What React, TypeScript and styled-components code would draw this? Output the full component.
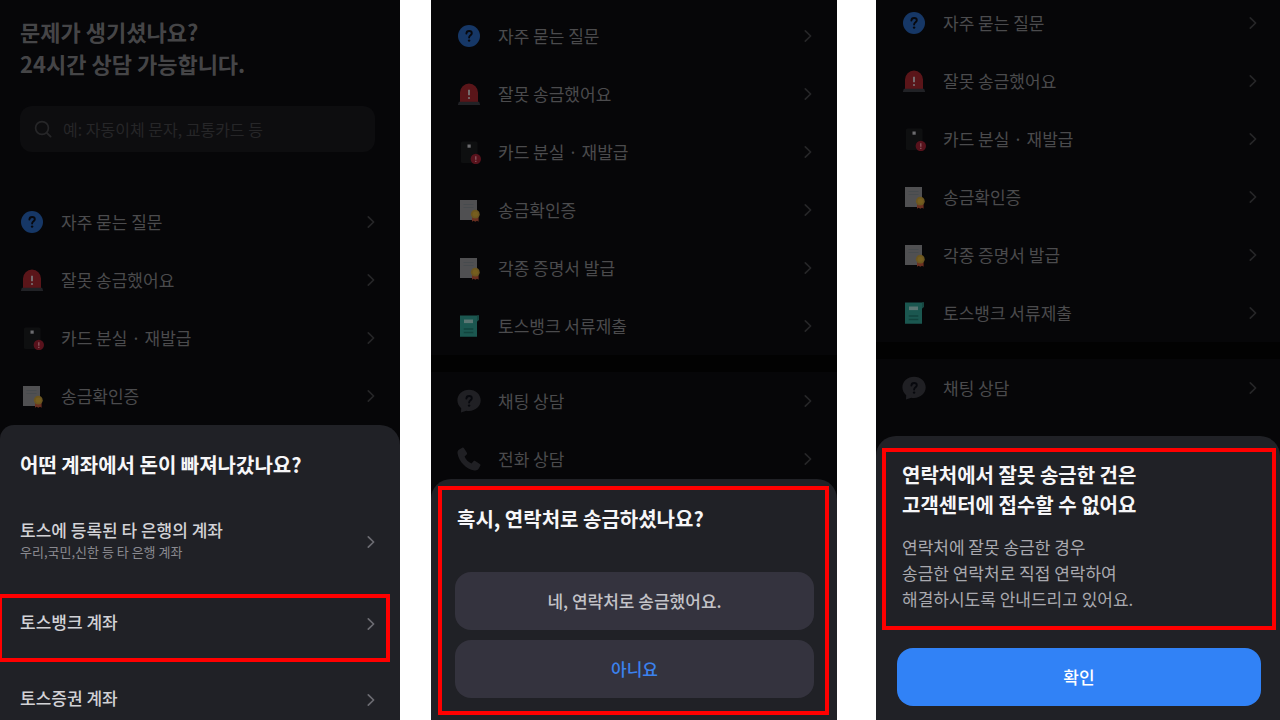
import React from 'react';
import styled, { createGlobalStyle, css } from 'styled-components';

const GlobalStyle = createGlobalStyle`
  *, *::before, *::after { box-sizing: border-box; }
  body {
    margin: 0;
    background: #ffffff;
    font-family: "Noto Sans CJK KR", "Noto Sans", sans-serif;
  }
  h1, h2, p, ul { margin: 0; padding: 0; }
  ul { list-style: none; }
  button, input { font: inherit; border: 0; padding: 0; }
`;

const Board = styled.main`
  display: grid;
  grid-template-columns: 400fr 31px 406fr 39px 404fr;
  min-height: 100vh;
`;

const Screen = styled.section<{ $column: number }>`
  grid-column: ${(p) => p.$column};
  display: flex;
  flex-direction: column;
  min-width: 0;
  overflow: hidden;
  background: #060608;
`;

const Intro = styled.header`
  padding: 15px 25px 41px 20px;
`;

const Heading = styled.h1`
  color: #454547;
  font-size: 22px;
  line-height: 32px;
  font-weight: 700;
`;

const SearchBox = styled.label`
  display: flex;
  align-items: center;
  gap: 11px;
  height: 46px;
  margin-top: 27px;
  padding: 0 14px;
  border-radius: 12px;
  background: #0d0d0f;
`;

const SearchInput = styled.input`
  flex: 1;
  min-width: 0;
  background: transparent;
  outline: none;
  color: #454547;
  font-size: 16px;
  line-height: 24px;
  &::placeholder { color: #262628; opacity: 1; }
`;

const MenuArea = styled.nav<{ $top?: number; $bottom?: number }>`
  margin-top: ${(p) => p.$top ?? 0}px;
  padding-bottom: ${(p) => p.$bottom ?? 0}px;
`;

const MenuLink = styled.a<{ $left: number; $right: number }>`
  display: flex;
  align-items: center;
  height: 58px;
  gap: 17px;
  padding: 0 ${(p) => p.$right}px 0 ${(p) => p.$left}px;
  color: #4b4b4d;
  font-size: 17px;
  line-height: 26px;
  text-decoration: none;
  svg { flex: none; }
  span { flex: 1; }
`;

const SectionBreak = styled.hr`
  height: 17px;
  margin: 0;
  border: 0;
  background: #020202;
`;

const Sheet = styled.section<{ $overlap?: number; $cropped?: boolean }>`
  position: relative;
  flex: 1 0 auto;
  margin-top: ${(p) => -(p.$overlap ?? 0)}px;
  border-radius: ${(p) => (p.$cropped ? '14px 20px 0 0' : '20px 20px 0 0')};
  background: #202126;
`;

const SheetTitle = styled.h2`
  color: #f6f6f8;
  font-size: 20px;
  line-height: 30px;
  font-weight: 700;
`;

const marked = css`
  border: 4px solid #ff0000;
`;

const AccountSheet = styled(Sheet)`
  padding-top: 25px;
  ${SheetTitle} { padding-left: 20px; }
`;

const OptionList = styled.ul`
  display: flex;
  flex-direction: column;
  gap: 8px;
  padding-top: 26px;
`;

const Option = styled.li<{ $marked?: boolean }>`
  ${(p) => p.$marked && css`
    ${marked}
    margin: 0 10px 4px -2px;
  `}
`;

const OptionButton = styled.button<{ $inset?: boolean; $last?: boolean }>`
  display: flex;
  align-items: center;
  justify-content: space-between;
  width: 100%;
  padding: 12px 20px ${(p) => (p.$last ? 6 : 20)}px;
  ${(p) => p.$inset && 'padding-left: 18px; padding-right: 6px;'}
  background: transparent;
  text-align: left;
  cursor: pointer;
`;

const OptionText = styled.span`
  display: flex;
  flex-direction: column;
  padding-bottom: 4px;
`;

const OptionName = styled.span`
  color: #d2d2d6;
  font-size: 17px;
  line-height: 24px;
  font-weight: 500;
`;

const OptionNote = styled.span`
  color: #8a8a90;
  font-size: 13px;
  line-height: 20px;
`;

const QuestionPanel = styled.div`
  ${marked}
  display: flex;
  flex-direction: column;
  gap: 10px;
  margin: 7px 8px 5px 7px;
  padding: 14px 11px 13px 13px;
  ${SheetTitle} { padding: 0 2px 28px; }
`;

const NoticePanel = styled.div`
  ${marked}
  margin: 12px 4px 18px 6px;
  padding: 8px 16px 14px;
`;

const NoticeText = styled.p`
  margin-top: 14px;
  color: #a9a9af;
  font-size: 17px;
  line-height: 26px;
`;

const ActionButton = styled.button<{ $tone: 'plain' | 'accent' | 'primary' }>`
  height: 58px;
  border-radius: 16px;
  font-size: 17px;
  line-height: 26px;
  font-weight: 500;
  cursor: pointer;
  background: ${(p) => (p.$tone === 'primary' ? '#3182f6' : '#34333e')};
  color: ${(p) => ({ plain: '#c3c3c8', accent: '#3b82ee', primary: '#ffffff' })[p.$tone]};
`;

const SheetFooter = styled.footer`
  display: grid;
  padding: 0 19px 14px 21px;
`;

const Chevron = ({ color = '#262628' }: { color?: string }) => (
  <svg width="18" height="18" viewBox="0 0 18 18" fill="none" aria-hidden="true">
    <path d="M6.3 3.8 11.6 9l-5.3 5.2" stroke={color} strokeWidth="1.7" strokeLinecap="round" strokeLinejoin="round" />
  </svg>
);

const SearchIcon = () => (
  <svg width="18" height="18" viewBox="0 0 18 18" fill="none" aria-hidden="true">
    <circle cx="8" cy="8" r="6.4" stroke="#262628" strokeWidth="1.7" />
    <path d="m12.8 12.8 3.800 3.800" stroke="#262628" strokeWidth="1.9" strokeLinecap="round" />
  </svg>
);

const QuestionMark = () => (
  <>
    <path d="M9.400 9.500c.1-1.600 1.200-2.500 2.700-2.500s2.700.9 2.700 2.300c0 2-2.700 2.100-2.700 4.300" fill="none" stroke="#07080d" strokeWidth="1.9" strokeLinecap="round" />
    <circle cx="12.1" cy="16.600" r="1.200" fill="#07080d" />
  </>
);

const Certificate = () => (
  <>
    <path d="M3 2h17v20H3z" fill="#505052" />
    <path d="M6.500 6.500h10M6.500 9.500h10" stroke="#474b4e" strokeWidth="1.200" />
    <path d="M15 18.500h3.300v5.200l-1.700-1-1.600 1zM18.300 18.500h3.300v5.200l-1.600-1-1.700 1z" fill="#6b3021" />
    <circle cx="18.300" cy="16.200" r="4.400" fill="#6b5620" />
    <circle cx="18.300" cy="16.200" r="2.600" fill="#765e1f" />
  </>
);

const drawings = {
  faq: (
    <>
      <circle cx="12" cy="12" r="11" fill="#163766" />
      <QuestionMark />
    </>
  ),
  siren: (
    <>
      <path d="M3 21V10.500a9 9 0 0 1 18 0V21z" fill="#5a1519" />
      <path d="M1.800 19.800h20.400L23.200 23H.8z" fill="#212226" />
      <path d="M12 7.800v5.400" stroke="#777173" strokeWidth="1.900" />
      <circle cx="12" cy="16" r="1.100" fill="#777173" />
    </>
  ),
  card: (
    <>
      <rect x="4" y="1.500" width="16.500" height="21.500" rx="1.500" fill="#0e0f10" />
      <rect x="10.500" y="4.500" width="3.200" height="3.200" fill="#6c6c6f" />
      <circle cx="18.800" cy="19" r="5.200" fill="#58121c" />
      <path d="M18.800 16.200v3.500M18.800 20.700v1.300" stroke="#8a5a60" strokeWidth="1.300" />
    </>
  ),
  certificate: <Certificate />,
  document: (
    <>
      <path d="M3 1.500h19v4.200l-2 1.800v15.200H3z" fill="#1b5750" />
      <path d="M20 1.500h2v4.200l-2 1.800z" fill="#164741" />
      <rect x="7" y="5.500" width="9" height="3.600" fill="#5b7673" />
      <path d="M6.800 15h9.500M6.800 18.500h9.500" stroke="#12433d" strokeWidth="1.300" />
    </>
  ),
  chat: (
    <>
      <path d="M12.100.7C5.700.7.4 5.300.4 11.300c0 3.200 1.500 5.900 3.800 7.900L4 23.500l5.300-1.800c.9.2 1.800.2 2.800.2 6.400 0 11.600-4.600 11.600-10.600S18.500.7 12.100.7z" fill="#202024" />
      <QuestionMark />
    </>
  ),
  phone: (
    <path
      d="M5.300.7 2.200 2.400C.7 3.300.3 4.800.6 6.700 2 14.800 9.200 22 17.300 23.400c1.900.3 3.400-.1 4.300-1.600l1.700-3.100c.3-.7.1-1.300-.5-1.700l-4.600-2.900c-.6-.4-1.200-.3-1.700.2l-2 2.100c-3.100-1.200-5.700-3.800-6.900-6.900l2.100-2c.5-.5.600-1.100.2-1.700L7 1.200C6.600.6 6 .4 5.300.7z"
      fill="#202024"
    />
  ),
};

type IconName = keyof typeof drawings;
type MenuEntry = [IconName, string];

const supportMenu: MenuEntry[] = [
  ['faq', '자주 묻는 질문'],
  ['siren', '잘못 송금했어요'],
  ['card', '카드 분실 · 재발급'],
  ['certificate', '송금확인증'],
  ['certificate', '각종 증명서 발급'],
  ['document', '토스뱅크 서류제출'],
];

const contactMenu: MenuEntry[] = [
  ['chat', '채팅 상담'],
  ['phone', '전화 상담'],
];

const Menu = ({ items, left, right }: { items: MenuEntry[]; left: number; right: number }) => (
  <ul>
    {items.map(([icon, label]) => (
      <li key={label}>
        <MenuLink href="#" $left={left} $right={right}>
          <svg width="24" height="24" viewBox="0 0 24 24" aria-hidden="true">{drawings[icon]}</svg>
          <span>{label}</span>
          <Chevron />
        </MenuLink>
      </li>
    ))}
  </ul>
);

export default function App() {
  return (
    <>
      <GlobalStyle />
      <Board>
        <Screen $column={1}>
          <Intro>
            <Heading>문제가 생기셨나요?<br />24시간 상담 가능합니다.</Heading>
            <SearchBox>
              <SearchIcon />
              <SearchInput type="text" aria-label="검색" placeholder="예: 자동이체 문자, 교통카드 등" />
            </SearchBox>
          </Intro>
          <MenuArea>
            <Menu items={supportMenu.slice(0, 4)} left={20} right={20} />
          </MenuArea>
          <AccountSheet $cropped>
            <SheetTitle>어떤 계좌에서 돈이 빠져나갔나요?</SheetTitle>
            <OptionList>
              <Option>
                <OptionButton type="button">
                  <OptionText>
                    <OptionName>토스에 등록된 타 은행의 계좌</OptionName>
                    <OptionNote>우리,국민,신한 등 타 은행 계좌</OptionNote>
                  </OptionText>
                  <Chevron color="#6c6c72" />
                </OptionButton>
              </Option>
              <Option $marked>
                <OptionButton type="button" $inset>
                  <OptionText>
                    <OptionName>토스뱅크 계좌</OptionName>
                  </OptionText>
                  <Chevron color="#6c6c72" />
                </OptionButton>
              </Option>
              <Option>
                <OptionButton type="button" $last>
                  <OptionText>
                    <OptionName>토스증권 계좌</OptionName>
                  </OptionText>
                  <Chevron color="#6c6c72" />
                </OptionButton>
              </Option>
            </OptionList>
          </AccountSheet>
        </Screen>

        <Screen $column={3}>
          <MenuArea $top={7}>
            <Menu items={supportMenu} left={26} right={20} />
            <SectionBreak />
            <Menu items={contactMenu} left={26} right={20} />
          </MenuArea>
          <Sheet $overlap={9}>
            <QuestionPanel>
              <SheetTitle>혹시, 연락처로 송금하셨나요?</SheetTitle>
              <ActionButton type="button" $tone="plain">네, 연락처로 송금했어요.</ActionButton>
              <ActionButton type="button" $tone="accent">아니요</ActionButton>
            </QuestionPanel>
          </Sheet>
        </Screen>

        <Screen $column={5}>
          <MenuArea $top={-6} $bottom={19}>
            <Menu items={supportMenu} left={26} right={18} />
            <SectionBreak />
            <Menu items={contactMenu.slice(0, 1)} left={26} right={18} />
          </MenuArea>
          <Sheet>
            <NoticePanel>
              <SheetTitle>연락처에서 잘못 송금한 건은<br />고객센터에 접수할 수 없어요</SheetTitle>
              <NoticeText>
                연락처에 잘못 송금한 경우<br />
                송금한 연락처로 직접 연락하여<br />
                해결하시도록 안내드리고 있어요.
              </NoticeText>
            </NoticePanel>
            <SheetFooter>
              <ActionButton type="button" $tone="primary">확인</ActionButton>
            </SheetFooter>
          </Sheet>
        </Screen>
      </Board>
    </>
  );
}
